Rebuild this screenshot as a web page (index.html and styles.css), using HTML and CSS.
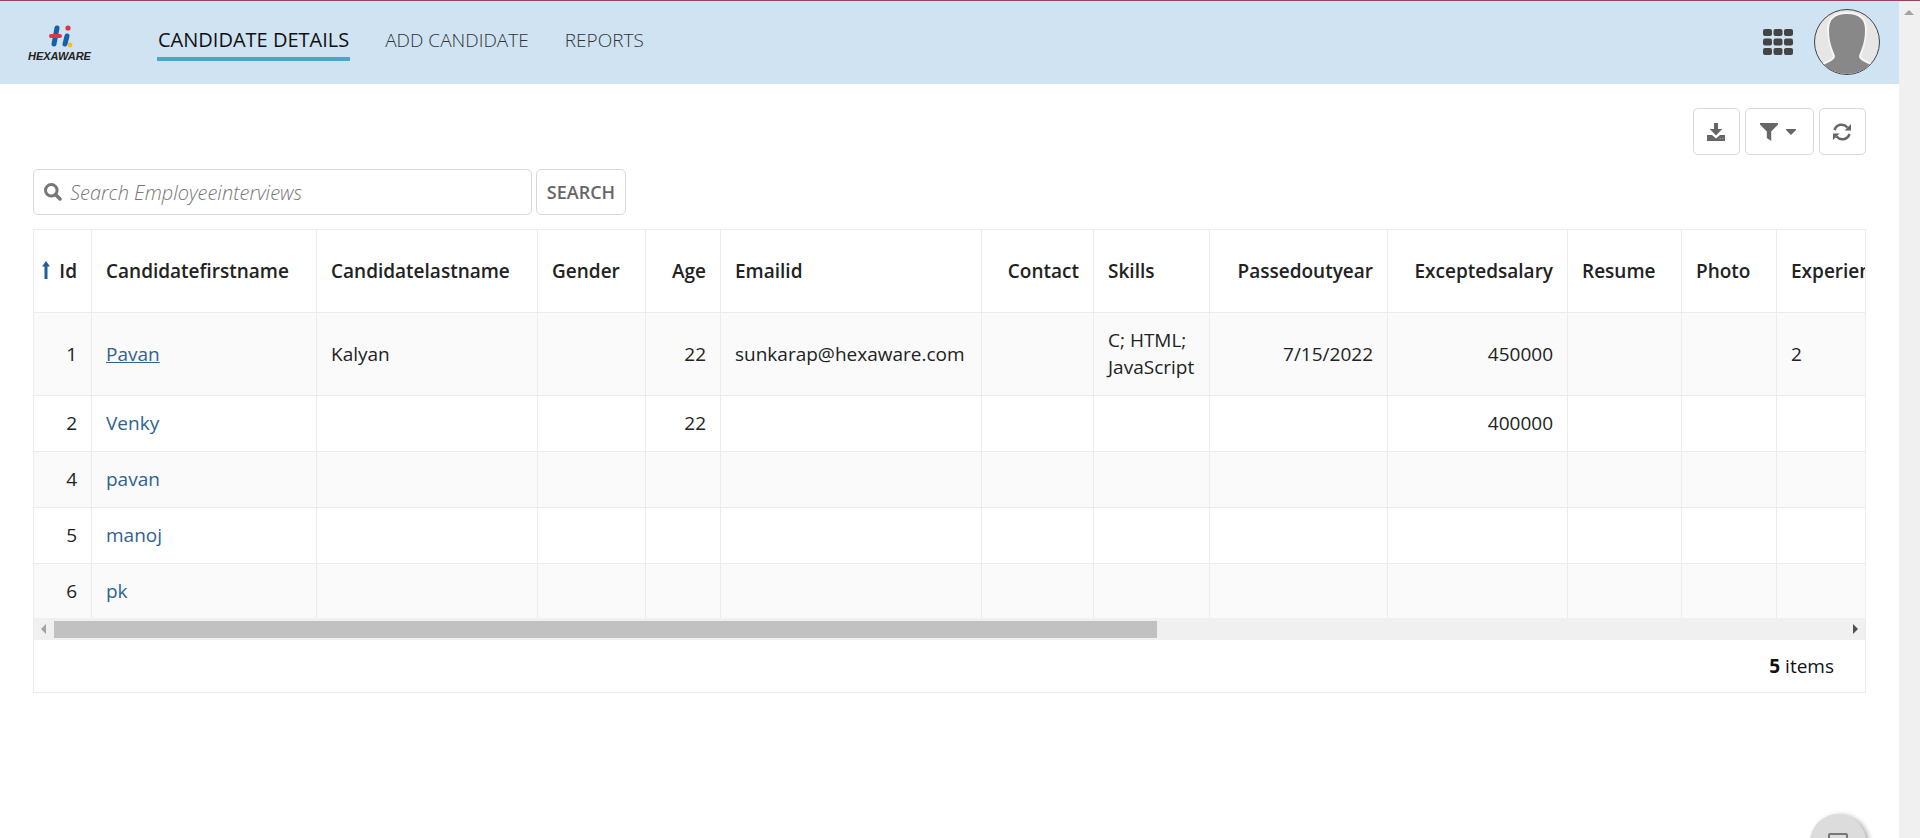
FILE: index.html
```html
<!DOCTYPE html>
<html lang="en">
<head>
    <meta charset="UTF-8">
    <meta name="viewport" content="width=device-width, initial-scale=1.0">
    <title>Candidate Details</title>
    <link rel="stylesheet" href="styles.css">
</head>
<body>

    <div class="window">
        <div class="page">

            <!-- Header -->
            <header class="header">
                <a href="#" class="logo" aria-label="Hexaware">
                    <svg width="66" height="38" viewBox="0 0 66 38">
                        <g fill="none" stroke-linecap="round">
                            <path stroke="#1460ab" stroke-width="5" d="M29 5L26 21M39 13L37 21"/>
                            <path stroke="#e03440" stroke-width="4" d="M23 13H32"/>
                        </g>
                        <circle cx="40" cy="5" r="2.6" fill="#e03440"/>
                        <circle cx="42" cy="22" r="2.4" fill="#fbb924"/>
                        <text x="0" y="37" class="logo-text">HEXAWARE</text>
                    </svg>
                </a>
                <nav class="nav">
                    <a href="#" class="nav-link active">CANDIDATE DETAILS</a>
                    <a href="#" class="nav-link">ADD CANDIDATE</a>
                    <a href="#" class="nav-link">REPORTS</a>
                </nav>
                <div class="account">
                    <button class="apps" aria-label="Apps">
                        <svg width="30" height="26" viewBox="0 0 30 26" fill="#444">
                            <rect x="0" y="0" width="9" height="7" rx="2"/>
                            <rect x="10.5" y="0" width="9" height="7" rx="2"/>
                            <rect x="21" y="0" width="9" height="7" rx="2"/>
                            <rect x="0" y="9.5" width="9" height="7" rx="2"/>
                            <rect x="10.5" y="9.5" width="9" height="7" rx="2"/>
                            <rect x="21" y="9.5" width="9" height="7" rx="2"/>
                            <rect x="0" y="19" width="9" height="7" rx="2"/>
                            <rect x="10.5" y="19" width="9" height="7" rx="2"/>
                            <rect x="21" y="19" width="9" height="7" rx="2"/>
                        </svg>
                    </button>
                    <button class="avatar" aria-label="Profile">
                        <svg width="64" height="64" viewBox="0 0 64 64">
                            <path fill="#888" stroke="#f6f6f6" stroke-width="4" paint-order="stroke" d="M32 4C20 4 14 9 14 20C14 32 17 38 20 46C20 50 14 52 8 55L4 68H60L56 55C50 52 44 50 44 46C47 38 50 32 50 20C50 9 44 4 32 4Z"/>
                        </svg>
                    </button>
                </div>
            </header>

            <main class="content">
                <div class="toolbar">
                    <button class="tool" aria-label="Export">
                        <svg width="18" height="18" viewBox="0 0 18 18" fill="#666">
                            <path d="M7 0H11V6H15.200L9 12.500L2.800 6H7Z"/>
                            <path d="M0 12H5L9 15.500L13 12H18V18H0Z"/>
                            <path fill="#999" d="M12.500 15H14V16H12.500ZM15 15H16.500V16H15Z"/>
                        </svg>
                    </button>
                    <button class="tool wide" aria-label="Filter">
                        <svg width="18" height="18" viewBox="0 0 18 18" fill="#666">
                            <path d="M0 0H18V1.500L11.200 8.500V18L6.800 15V8.500L0 1.500Z"/>
                        </svg>
                        <svg width="10" height="6" viewBox="0 0 10 6" fill="#666">
                            <path d="M0 0H10V1L5 6L0 1Z"/>
                        </svg>
                    </button>
                    <button class="tool" aria-label="Refresh">
                        <svg width="18" height="18" viewBox="0 0 18 18">
                            <path fill="none" stroke="#666" stroke-width="2.500" d="M1.500 7C3.500 1 10.500 0 14.500 4.500M16.500 11C14.500 17 7.500 18 3.500 13.500"/>
                            <path fill="#666" d="M18 1V7.500H11.500ZM0 17V10.500H6.500Z"/>
                        </svg>
                    </button>
                </div>

                <form class="search">
                    <label class="search-box">
                        <svg width="18" height="18" viewBox="0 0 18 18" fill="none" stroke="#777">
                            <circle cx="7.300" cy="7.300" r="5.800" stroke-width="3"/>
                            <path stroke-width="3.500" stroke-linecap="round" d="M12 12L16 16"/>
                        </svg>
                        <input type="text" placeholder="Search Employeeinterviews" aria-label="Search Employeeinterviews">
                    </label>
                    <button type="button" class="search-button">SEARCH</button>
                </form>

                <div class="grid">
                    <div class="grid-scroll">
                        <table>
                            <colgroup>
                                <col class="c-id">
                                <col class="c-first">
                                <col class="c-last">
                                <col class="c-gender">
                                <col class="c-age">
                                <col class="c-email">
                                <col class="c-contact">
                                <col class="c-skills">
                                <col class="c-passed">
                                <col class="c-salary">
                                <col class="c-resume">
                                <col class="c-photo">
                                <col class="c-experience">
                            </colgroup>
                            <thead>
                                <tr>
                                    <th class="num sorted">
                                        <svg width="8" height="18" viewBox="0 0 8 18" fill="#1f5f99">
                                            <path d="M4 0L8 5.500H5.500V18H2.500V5.500H0Z"/>
                                        </svg>
                                        Id
                                    </th>
                                    <th>Candidatefirstname</th>
                                    <th>Candidatelastname</th>
                                    <th>Gender</th>
                                    <th class="num">Age</th>
                                    <th>Emailid</th>
                                    <th class="num">Contact</th>
                                    <th>Skills</th>
                                    <th class="num">Passedoutyear</th>
                                    <th class="num">Exceptedsalary</th>
                                    <th>Resume</th>
                                    <th>Photo</th>
                                    <th>Experience</th>
                                </tr>
                            </thead>
                            <tbody>
                                <tr>
                                    <td class="num">1</td>
                                    <td><a href="#" class="focused">Pavan</a></td>
                                    <td>Kalyan</td>
                                    <td></td>
                                    <td class="num">22</td>
                                    <td>sunkarap@hexaware.com</td>
                                    <td></td>
                                    <td>C; HTML; JavaScript</td>
                                    <td class="num">7/15/2022</td>
                                    <td class="num">450000</td>
                                    <td></td>
                                    <td></td>
                                    <td>2</td>
                                </tr>
                                <tr>
                                    <td class="num">2</td>
                                    <td><a href="#">Venky</a></td>
                                    <td></td>
                                    <td></td>
                                    <td class="num">22</td>
                                    <td></td>
                                    <td></td>
                                    <td></td>
                                    <td></td>
                                    <td class="num">400000</td>
                                    <td></td>
                                    <td></td>
                                    <td></td>
                                </tr>
                                <tr>
                                    <td class="num">4</td>
                                    <td><a href="#">pavan</a></td>
                                    <td></td><td></td><td></td><td></td><td></td><td></td><td></td><td></td><td></td><td></td><td></td>
                                </tr>
                                <tr>
                                    <td class="num">5</td>
                                    <td><a href="#">manoj</a></td>
                                    <td></td><td></td><td></td><td></td><td></td><td></td><td></td><td></td><td></td><td></td><td></td>
                                </tr>
                                <tr>
                                    <td class="num">6</td>
                                    <td><a href="#">pk</a></td>
                                    <td></td><td></td><td></td><td></td><td></td><td></td><td></td><td></td><td></td><td></td><td></td>
                                </tr>
                            </tbody>
                        </table>
                    </div>
                    <div class="hbar">
                        <svg width="5" height="10" viewBox="0 0 5 10" fill="#a3a3a3"><path d="M5 0V10L0 5Z"/></svg>
                        <div class="hbar-track"><div class="hbar-thumb"></div></div>
                        <svg width="5" height="10" viewBox="0 0 5 10" fill="#505050"><path d="M0 0V10L5 5Z"/></svg>
                    </div>
                    <div class="grid-footer"><b>5</b> items</div>
                </div>
            </main>

            <button class="chat" aria-label="Feedback">
                <svg width="20" height="18" viewBox="0 0 20 18" fill="none" stroke="#777" stroke-width="2">
                    <path d="M19 8V2Q19 1 18 1H2Q1 1 1 2V17L5 13H10"/>
                </svg>
            </button>
        </div>

        <!-- Page scrollbar -->
        <div class="vbar">
            <svg width="10" height="5" viewBox="0 0 10 5" fill="#a3a3a3"><path d="M0 5H10L5 0Z"/></svg>
        </div>
    </div>

</body>
</html>
```
FILE: styles.css
```css
* {
    box-sizing: border-box;
}
body {
    margin: 0;
    font-family: "Open Sans", sans-serif;
    font-size: 19px;
    line-height: 27px;
    color: #222;
    background-color: #fff;
}
button, input {
    font-family: inherit;
    font-size: inherit;
}
button {
    padding: 0;
    border: none;
    background: none;
    cursor: pointer;
}
svg {
    display: block;
    flex: none;
}
.window {
    display: flex;
    height: 100vh;
    overflow: hidden;
    border-top: 1px solid #8f4560;
}
.page {
    position: relative;
    flex: 1;
    min-width: 0;
    overflow: hidden;
}

/* Header */
.header {
    display: flex;
    align-items: center;
    height: 83px;
    padding: 0 19px 2px 28px;
    background-color: #cfe3f3;
}
.logo-text {
    font-family: "Liberation Sans", Arial, sans-serif;
    font-size: 11px;
    font-weight: bold;
    font-style: italic;
    fill: #222;
}
.nav {
    display: flex;
    gap: 34px;
    margin-left: 63px;
}
.nav-link {
    padding: 0 1px;
    border-bottom: 4px solid transparent;
    line-height: 34px;
    font-weight: 300;
    color: #333;
    text-decoration: none;
}
.nav-link.active {
    border-color: #48a6c8;
    font-size: 20px;
    font-weight: 400;
    color: #111;
}
.account {
    display: flex;
    align-items: center;
    gap: 21px;
    margin-left: auto;
}
.avatar {
    width: 66px;
    height: 66px;
    border: 1px solid #444;
    border-radius: 50%;
    overflow: hidden;
    background-color: #e6e6e6;
}

/* Content */
.content {
    padding: 24px 33px;
}
.toolbar {
    display: flex;
    justify-content: flex-end;
    gap: 5px;
}
.tool {
    display: flex;
    align-items: center;
    justify-content: center;
    gap: 8px;
    width: 47px;
    height: 47px;
    padding-right: 2px;
    border: 1px solid #d8d8d8;
    border-radius: 5px;
}
.tool.wide {
    width: 69px;
    padding-right: 4px;
}
.search {
    display: flex;
    gap: 4px;
    margin: 14px 0;
}
.search-box {
    display: flex;
    align-items: center;
    gap: 8px;
    width: 499px;
    height: 46px;
    padding: 0 10px;
    border: 1px solid #d8d8d8;
    border-radius: 5px;
}
.search-box input {
    flex: 1;
    min-width: 0;
    padding: 0;
    border: none;
    outline: none;
    font-size: 20px;
}
.search-box input::placeholder {
    font-style: italic;
    font-weight: 300;
    color: #777;
}
.search-button {
    width: 90px;
    border: 1px solid #d8d8d8;
    border-radius: 5px;
    font-size: 18px;
    font-weight: 600;
    color: #666;
}

/* Table */
.grid {
    border: 1px solid #ececec;
}
.grid-scroll {
    overflow: hidden;
}
table {
    width: 1940px;
    table-layout: fixed;
    border-collapse: separate;
    border-spacing: 0;
}
.c-id { width: 58px; }
.c-first { width: 225px; }
.c-last { width: 221px; }
.c-gender { width: 108px; }
.c-age { width: 75px; }
.c-email { width: 261px; }
.c-contact { width: 112px; }
.c-skills { width: 116px; }
.c-passed { width: 178px; }
.c-salary { width: 180px; }
.c-resume { width: 114px; }
.c-photo { width: 95px; }
th, td {
    padding: 14px;
    border-right: 1px solid #ececec;
    border-bottom: 1px solid #ececec;
    text-align: left;
    font-weight: 400;
}
th {
    height: 83px;
    font-weight: 600;
    white-space: nowrap;
}
.num {
    text-align: right;
}
.sorted {
    padding-left: 8px;
}
.sorted svg {
    float: left;
    margin-top: 3px;
}
tbody tr:nth-child(odd) {
    background-color: #fafafa;
}
tbody tr:last-child td {
    padding-bottom: 13px;
    border-bottom: none;
}
td a {
    color: #30628f;
    text-decoration: none;
}
td a.focused {
    text-decoration: underline;
}
.hbar {
    display: flex;
    align-items: center;
    gap: 8px;
    height: 22px;
    padding: 0 7px;
    background-color: #f0f0f0;
}
.hbar-track {
    flex: 1;
}
.hbar-thumb {
    width: 61.6%;
    height: 17px;
    background-color: #c1c1c1;
}
.grid-footer {
    padding: 13px 31px 12px;
    text-align: right;
    color: #111;
}

/* Feedback bubble, partly below the fold */
.chat {
    position: absolute;
    right: 33px;
    bottom: -32px;
    width: 56px;
    height: 56px;
    border-radius: 50%;
    background-color: #dcdcdc;
    box-shadow: 3px 1px 5px rgba(0, 0, 0, 0.3);
}
.chat svg {
    margin: 0 auto;
}
.vbar {
    width: 21px;
    padding: 9px 5px;
    background-color: #f0f0f0;
}
```
